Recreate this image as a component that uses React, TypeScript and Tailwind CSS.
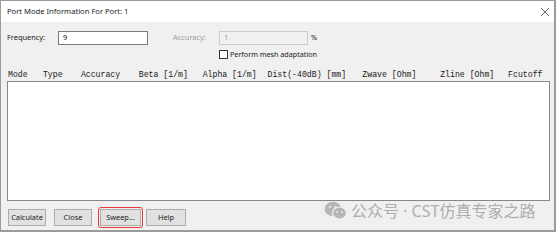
import React from "react";

const cols = [
  { label: "Mode", w: "w-[35px]" },
  { label: "Type", w: "w-[38px]" },
  { label: "Accuracy", w: "w-[58px]" },
  { label: "Beta [1/m]", w: "w-[64px]" },
  { label: "Alpha [1/m]", w: "w-[65px]" },
  { label: "Dist(-40dB) [mm]", w: "w-[95px]" },
  { label: "Zwave [Ohm]", w: "w-[78px]" },
  { label: "Zline [Ohm]", w: "w-[68px]" },
  { label: "Fcutoff", w: "w-[40px]" },
];

function Btn({ label, w }: { label: string; w: string }) {
  return (
    <div
      className={`${w} h-[17px] flex items-center justify-center bg-[#e1e1e1] border border-[#adadad] text-[7.4px] text-[#222]`}
    >
      {label}
    </div>
  );
}

export default function App() {
  return (
    <div
      className="relative w-[556px] h-[232px] bg-[#f0f0f0] border border-[#9b9b9b] border-r-2 border-b-2 flex flex-col overflow-hidden"
      style={{ fontFamily: '"Noto Sans", "Open Sans", sans-serif' }}
    >
      {/* title bar */}
      <div className="h-[21px] bg-white flex items-center justify-between pl-[6px] pr-[4px]">
        <span className="text-[7.6px] text-[#1a1a1a]">Port Mode Information For Port: 1</span>
        <svg width="10" height="10" viewBox="0 0 10 10" className="text-[#555]">
          <path d="M1 1 L9 9 M9 1 L1 9" stroke="currentColor" strokeWidth="0.9" />
        </svg>
      </div>

      <div className="flex flex-col px-[6px]">
        {/* frequency / accuracy row */}
        <div className="mt-[9px] h-[14px] flex items-center">
          <span className="w-[51px] text-[7.4px] text-[#1a1a1a]">Frequency:</span>
          <div className="w-[90px] h-[14px] bg-white border border-[#7a7a7a] flex items-center pl-[4px] text-[7.4px] text-[#111]">
            9
          </div>
          <span className="ml-[25px] w-[46px] text-[7.4px] text-[#9d9d9d]">Accuracy:</span>
          <div className="w-[89px] h-[14px] bg-[#f0f0f0] border border-[#cccccc] flex items-center pl-[4px] text-[7.4px] text-[#9d9d9d]">
            1
          </div>
          <span className="ml-[3px] text-[7.4px] text-[#1a1a1a]">%</span>
        </div>

        {/* checkbox row */}
        <div className="mt-[4px] ml-[212px] h-[10px] flex items-center gap-[2px]">
          <div className="w-[9px] h-[9px] bg-white border border-[#333]" />
          <span className="text-[7.2px] text-[#1a1a1a]">Perform mesh adaptation</span>
        </div>

        {/* header */}
        <div
          className="mt-[11px] h-[10px] flex items-center pl-[1px] text-[8.2px] text-[#1a1a1a] whitespace-pre"
          style={{ fontFamily: '"Liberation Mono", monospace' }}
        >
          {cols.map((c) => (
            <span key={c.label} className={c.w}>
              {c.label}
            </span>
          ))}
        </div>

        {/* list */}
        <div className="mt-[1px] w-[543px] h-[120px] bg-white border border-[#828790]" />

        {/* buttons */}
        <div className="mt-[6px] flex items-center">
          <div className="ml-[1px]">
            <Btn label="Calculate" w="w-[38px]" />
          </div>
          <div className="ml-[8px]">
            <Btn label="Close" w="w-[38px]" />
          </div>
          <div className="ml-[6px] p-[1px] border border-[#e8393a] rounded-[3px]">
            <Btn label="Sweep..." w="w-[41px]" />
          </div>
          <div className="ml-[3px]">
            <Btn label="Help" w="w-[40px]" />
          </div>
        </div>
      </div>

      {/* watermark */}
      <div className="absolute left-[323px] top-[200px] flex items-center gap-[4px] text-[#a7a7a7] opacity-90">
        <svg width="23" height="19" viewBox="0 0 23 19">
          <ellipse cx="9" cy="8" rx="8.5" ry="7.2" fill="#b0b0b0" />
          <ellipse cx="15.5" cy="12" rx="7" ry="6" fill="#b0b0b0" stroke="#f0f0f0" strokeWidth="1.2" />
          <circle cx="6" cy="6" r="1.1" fill="#f0f0f0" />
          <circle cx="11.5" cy="6" r="1.1" fill="#f0f0f0" />
          <circle cx="13" cy="11" r="0.9" fill="#f0f0f0" />
          <circle cx="18" cy="11" r="0.9" fill="#f0f0f0" />
        </svg>
        <span
          className="text-[16px] leading-none"
          style={{ fontFamily: '"Noto Sans", "Noto Sans CJK SC", sans-serif' }}
        >
          公众号 · CST仿真专家之路
        </span>
      </div>
    </div>
  );
}
